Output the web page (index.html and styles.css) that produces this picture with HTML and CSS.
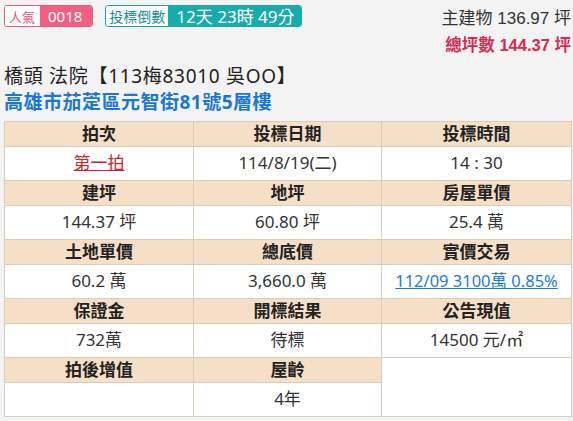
FILE: index.html
```html
<!DOCTYPE html>
<html lang="zh-Hant">
<head>
<meta charset="utf-8">
<link rel="stylesheet" href="styles.css">
</head>
<body>
<div class="page">
  <div class="top">
    <div class="badges">
      <div class="badge pink"><span class="lbl">人氣</span><span class="val">0018</span></div>
      <div class="badge teal"><span class="lbl">投標倒數</span><span class="val">12天 23時 49分</span></div>
    </div>
    <div class="area">
      <div class="main">主建物 136.97 坪</div>
      <div class="total">總坪數 144.37 坪</div>
    </div>
  </div>
  <div class="title">橋頭 法院【113梅83010 吳OO】</div>
  <div class="addr">高雄市茄萣區元智街81號5層樓</div>
  <table class="info">
    <colgroup><col class="c1"><col class="c2"><col class="c3"></colgroup>
    <tr class="hd"><th>拍次</th><th>投標日期</th><th>投標時間</th></tr>
    <tr class="dt"><td><a class="round" href="#">第一拍</a></td><td>114/8/19(二)</td><td>14 : 30</td></tr>
    <tr class="hd"><th>建坪</th><th>地坪</th><th>房屋單價</th></tr>
    <tr class="dt"><td>144.37 坪</td><td>60.80 坪</td><td>25.4 萬</td></tr>
    <tr class="hd"><th>土地單價</th><th>總底價</th><th>實價交易</th></tr>
    <tr class="dt"><td>60.2 萬</td><td>3,660.0 萬</td><td><a class="link" href="#">112/09 3100萬 0.85%</a></td></tr>
    <tr class="hd"><th>保證金</th><th>開標結果</th><th>公告現值</th></tr>
    <tr class="dt"><td>732萬</td><td>待標</td><td>14500 元/㎡</td></tr>
    <tr class="hd"><th>拍後增值</th><th>屋齡</th><td class="blank" rowspan="2"></td></tr>
    <tr class="dt"><td></td><td>4年</td></tr>
  </table>
</div>
</body>
</html>
```
FILE: styles.css
```css
html, body {
  margin: 0;
  padding: 0;
  background: #f3f3f3;
}
body {
  font-family: "Noto Sans", "Noto Sans CJK TC", sans-serif;
  color: #222;
}
.page {
  padding: 5px 2px 0 4px;
}
.top {
  display: flex;
  justify-content: space-between;
  align-items: flex-start;
}
.badges {
  display: flex;
  gap: 12px;
}
.badge {
  display: flex;
  height: 22px;
  border-radius: 3px;
  overflow: hidden;
  border: 1px solid;
  box-sizing: border-box;
}
.badge span {
  display: flex;
  align-items: center;
  line-height: 1;
  white-space: nowrap;
}
.badge .lbl {
  background: #fff;
  font-family: "Noto Sans CJK TC", sans-serif;
  padding: 0 4px;
}
.badge .val {
  color: #fff;
}
.pink { border-color: #ec5b7c; }
.pink .lbl { color: #e5557a; font-size: 13px; padding: 0 5px 0 4px; }
.pink .val { background: #f25f80; font-size: 15px; padding: 0 10px 0 8px; }
.teal { border-color: #1aa9a9; }
.teal .lbl { color: #138f8f; font-size: 14px; padding: 0 3px 0 3px; }
.teal .val { background: #17abab; font-size: 17px; padding: 0 6px 0 8px; }
.area {
  text-align: right;
  font-family: "Liberation Sans", "Noto Sans CJK TC", sans-serif;
  line-height: 27px;
}
.main { color: #333; font-size: 17px; }
.total { color: #d42b52; font-weight: bold; font-size: 16.5px; }
.title {
  margin-top: 4px;
  font-size: 19px;
  line-height: 26px;
  color: #222;
  letter-spacing: 0.7px;
}
.addr {
  font-size: 19px;
  line-height: 26px;
  color: #1a78d4;
  font-weight: bold;
  letter-spacing: 0.5px;
}
.info {
  margin-top: 6px;
  width: 567px;
  border-collapse: collapse;
  table-layout: fixed;
  border: 1px solid #b3a99a;
  font-size: 17px;
}
.c1 { width: 189px; }
.c2 { width: 188px; }
.c3 { width: 190px; }
.info th, .info td {
  border: 1px solid #d8ccba;
  padding: 0;
  text-align: center;
  vertical-align: middle;
  line-height: 1.2;
}
.info tr.hd th {
  background: #f6dfc7;
  height: 24px;
  font-weight: bold;
  color: #222;
  font-size: 17px;
}
.info tr.dt td {
  background: #fff;
  height: 33px;
  color: #333;
  font-weight: 400;
}
.info td.blank { background: #fff; }
.round {
  color: #c8242c;
  text-decoration: underline;
}
.link {
  color: #1c7cd6;
  font-size: 16.5px;
  text-decoration: underline;
}
```
